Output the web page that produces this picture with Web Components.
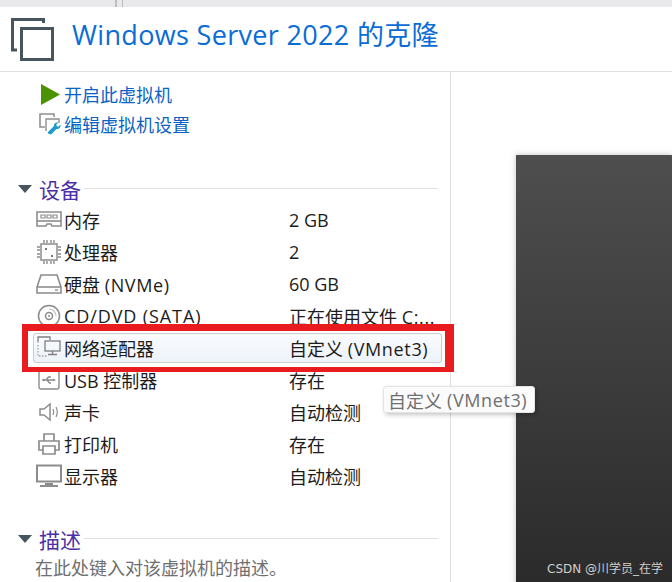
<!DOCTYPE html>
<html>
<head>
<meta charset="utf-8">
<style>
    html, body { margin: 0; padding: 0; background: #fff; }
    body { width: 672px; height: 582px; overflow: hidden; font-family: "Open Sans", "Noto Sans CJK SC", sans-serif; }
    .wide { letter-spacing: .65px; }
    .wider { letter-spacing: .9px; }
</style>
</head>
<body>
<vm-page>
    <vm-header slot="header" title-text="Windows Server 2022 的克隆"></vm-header>
    <vm-action slot="actions" icon="play">开启此虚拟机</vm-action>
    <vm-action slot="actions" icon="edit">编辑虚拟机设置</vm-action>
    <vm-section slot="devices" label="设备"></vm-section>
    <vm-device slot="devices" icon="ram">内存<span slot="value">2 GB</span></vm-device>
    <vm-device slot="devices" icon="cpu">处理器<span slot="value">2</span></vm-device>
    <vm-device slot="devices" icon="disk">硬盘 <span class="wide">(NVMe)</span><span slot="value">60 GB</span></vm-device>
    <vm-device slot="devices" icon="cd"><span class="wider">CD/DVD (SATA)</span><span slot="value">正在使用文件 <span class="wide">C:...</span></span></vm-device>
    <vm-device slot="devices" icon="net" selected>网络适配器<span slot="value">自定义 <span class="wide">(VMnet3)</span></span></vm-device>
    <vm-device slot="devices" icon="usb">USB 控制器<span slot="value">存在</span></vm-device>
    <vm-device slot="devices" icon="sound">声卡<span slot="value">自动检测</span></vm-device>
    <vm-device slot="devices" icon="printer">打印机<span slot="value">存在</span></vm-device>
    <vm-device slot="devices" icon="display">显示器<span slot="value">自动检测</span></vm-device>
    <vm-section slot="description" label="描述"></vm-section>
    <vm-note slot="description">在此处键入对该虚拟机的描述。</vm-note>
</vm-page>

<script>
const icons = {
    play: `<svg width="19" height="21" viewBox="0 0 19 21"><path d="M0 0L19 10.500L0 21Z" fill="#4c9304"/></svg>`,
    edit: `<svg width="24" height="24" viewBox="0 0 24 24" fill="none"><path d="M7 15H2V2H16V5" stroke="#8f8f8f" stroke-width="1.6"/><path d="M8 19V7H21V11" stroke="#8f8f8f" stroke-width="1.4"/><path d="M11 22L9.500 20.500L16 14C15.500 12 17.500 10 20.500 10.500L18 13L20 15L22.500 12.500C23 15.500 21 17.500 18.500 17L13 22.500Z" fill="#1c9ac9"/></svg>`,
    ram: `<svg width="26" height="20" viewBox="0 0 26 20" fill="none" stroke="#8c8c8c" stroke-width="1.600"><path d="M1 2H25V16H16L15 14H11L10 16H1Z"/><path d="M1 11H25"/><path d="M5 5H9V8H5ZM11 5H15V8H11ZM17 5H21V8H17Z" stroke-width="1.200"/></svg>`,
    cpu: `<svg width="26" height="26" viewBox="0 0 26 26" fill="none" stroke="#8c8c8c"><rect x="5" y="5" width="16" height="16" stroke-width="1.500"/><path d="M8 1V4M11 1V4M15 1V4M18 1V4M8 22V25M11 22V25M15 22V25M18 22V25M1 8H4M1 11H4M1 15H4M1 18H4M22 8H25M22 11H25M22 15H25M22 18H25" stroke-width="1.400"/><path d="M9 9h2v2h-2zM15 16h2v2h-2z" fill="#777" stroke="none"/></svg>`,
    disk: `<svg width="26" height="22" viewBox="0 0 26 22" fill="none" stroke="#8c8c8c" stroke-width="1.600"><path d="M1 14L5 2H21L25 14V20H1Z"/><path d="M1 14H25"/><path d="M19 17H22" stroke-width="1.400"/></svg>`,
    cd: `<svg width="24" height="24" viewBox="0 0 24 24" fill="none" stroke="#8c8c8c"><circle cx="12" cy="12" r="10.500" stroke-width="1.500"/><circle cx="12" cy="12" r="3.500" stroke-width="1.500"/><circle cx="12" cy="12" r="1" fill="#8c8c8c" stroke="none"/><path d="M12 5A7 7 0 0 1 19 12" stroke="#c0c0c0" stroke-width="1.200"/></svg>`,
    net: `<svg width="24" height="24" viewBox="0 0 24 24" fill="none" stroke="#7f7f7f" stroke-width="1.300"><path d="M1 6.500V1H13V4"/><rect x="8" y="5" width="15" height="10"/><path d="M15.500 15V18M11 18.500H20"/><path d="M1 9V20H10" stroke="#a0a0a0" stroke-dasharray="1.500 1.500"/></svg>`,
    usb: `<svg width="22" height="20" viewBox="0 0 22 20" fill="none" stroke="#8c8c8c" stroke-width="1.400"><rect x="1" y="1" width="20" height="18" rx="2"/><path d="M6 10H15M8 10L10.500 7H13M9 10L11.500 13H13"/><circle cx="5.500" cy="10" r="1.300" fill="#8c8c8c" stroke="none"/><path d="M15 8.500L18 10L15 11.500Z" fill="#8c8c8c" stroke="none"/></svg>`,
    sound: `<svg width="22" height="22" viewBox="0 0 22 22" fill="none" stroke="#8c8c8c" stroke-width="1.500"><path d="M2 8V14H6L12 19V3L6 8Z"/><path d="M15 8C16 10 16 12 15 14M18 6C19.500 9 19.500 13 18 16" stroke-width="1.200"/></svg>`,
    printer: `<svg width="24" height="24" viewBox="0 0 24 24" fill="none" stroke="#8c8c8c" stroke-width="1.700"><path d="M7 9V2H17V9"/><path d="M6 18H2V9H22V18H18"/><path d="M6 14H18V22H6Z"/></svg>`,
    display: `<svg width="26" height="24" viewBox="0 0 26 24" fill="none"><rect x="1" y="1.500" width="24" height="16" stroke="#8c8c8c" stroke-width="2"/><path d="M9 19H17V21H22V23H4V21H9Z" fill="#8c8c8c"/></svg>`
};

class VmPage extends HTMLElement {
    constructor() {
        super();
        this.attachShadow({ mode: 'open' }).innerHTML = `
            <style>
                :host { display: block; position: relative; width: 672px; height: 582px; overflow: hidden; background: #fff; }
                .tabs { height: 7px; background: #e9e9eb; display: flex; }
                .tabs i { width: 2px; height: 7px; background: #bdbdbf; margin-left: 115px; }
                .tabs i + i { width: 1px; margin-left: 5px; }
                .body { display: flex; height: 510px; border-top: 1px solid #e0e0e0; }
                .left { width: 451px; box-sizing: border-box; border-right: 1px solid #e0e0e0; flex: none; }
                .actions { padding: 7px 0 0 37px; }
                .devices { padding-top: 34px; }
                .devices ::slotted(vm-device) { top: 0; }
                .description { padding-top: 30px; }
                .right { flex: 1; padding: 83px 0 0 65px; }
                .screen { height: 440px; background: linear-gradient(#4e4e4e, #2a2a2a); box-shadow: 0 0 6px rgba(0,0,0,.25); }
                .outline {
                    position: absolute; left: 22px; top: 324px; width: 432px; height: 48px;
                    box-sizing: border-box; border: solid #e81c1f; border-width: 7px 9px 5px 6px; pointer-events: none;
                }
                .tip {
                    position: absolute; left: 383px; top: 386px; height: 27px; padding: 0 7px 0 4px;
                    display: flex; align-items: center; background: #fbfbfb; border: 1px solid #e4e4e4;
                    border-radius: 3px; box-shadow: 2px 2px 4px rgba(0,0,0,.22);
                    color: #6f6f6f; font-size: 18px; white-space: nowrap; box-sizing: border-box;
                }
                .tip span { letter-spacing: .6px; margin-left: 5px; }
                .watermark {
                    position: absolute; left: 547px; top: 559px; color: #cfcfcf; font-size: 12px; white-space: nowrap;
                    font-family: "DejaVu Sans", "Noto Sans CJK SC", sans-serif;
                }
            </style>
            <div class="tabs"><i></i><i></i></div>
            <slot name="header"></slot>
            <div class="body">
                <div class="left">
                    <div class="actions"><slot name="actions"></slot></div>
                    <div class="devices"><slot name="devices"></slot></div>
                    <div class="description"><slot name="description"></slot></div>
                </div>
                <div class="right"><div class="screen"></div></div>
            </div>
            <div class="outline"></div>
            <div class="tip">自定义<span>(VMnet3)</span></div>
            <div class="watermark">CSDN @川学员_在学</div>
        `;
    }
}

class VmHeader extends HTMLElement {
    constructor() {
        super();
        this.attachShadow({ mode: 'open' }).innerHTML = `
            <style>
                :host { display: flex; align-items: center; height: 64px; box-sizing: border-box; }
                svg { margin: 0 18px 0 11px; flex: none; }
                h1 { margin: -8px 0 0; font-size: 27px; font-weight: 400; color: #0a6cd6; white-space: nowrap; line-height: 40px; letter-spacing: .33px; }
            </style>
            <svg width="43" height="43" viewBox="0 0 43 43" fill="none" stroke="#47555f" stroke-width="3">
                <path d="M6 32H1.500V1.500H32.500V5"/>
                <rect x="10.500" y="10.500" width="31" height="31"/>
            </svg>
            <h1></h1>
        `;
        this.shadowRoot.querySelector('h1').textContent = this.getAttribute('title-text');
    }
}

class VmAction extends HTMLElement {
    constructor() {
        super();
        this.attachShadow({ mode: 'open' }).innerHTML = `
            <style>
                :host { display: flex; align-items: center; height: 30px; color: #0a63c4; font-size: 18px; white-space: nowrap; }
                .icon { width: 26px; margin-right: 1px; display: flex; justify-content: center; flex: none; }
            </style>
            <span class="icon">${icons[this.getAttribute('icon')]}</span>
            <slot></slot>
        `;
    }
}

class VmSection extends HTMLElement {
    constructor() {
        super();
        this.attachShadow({ mode: 'open' }).innerHTML = `
            <style>
                :host { display: flex; align-items: center; height: 32px; padding-left: 18px; padding-right: 12px; color: #4b2fa8; font-size: 21px; }
                .arrow { width: 0; height: 0; border: 7.500px solid transparent; border-top: 8px solid #47555f; border-bottom: 0; margin-right: 7px; }
                .rule { flex: 1; height: 1px; background: #e0e0e0; margin: -2px 0 0 3px; }
            </style>
            <span class="arrow"></span>
            <span class="label"></span>
            <span class="rule"></span>
        `;
        this.shadowRoot.querySelector('.label').textContent = this.getAttribute('label');
    }
}

class VmDevice extends HTMLElement {
    constructor() {
        super();
        this.attachShadow({ mode: 'open' }).innerHTML = `
            <style>
                :host { display: block; height: 32px; margin-top: 0; font-size: 18px; color: #1c1c1c; padding: 0 8px 0 33px; box-sizing: border-box; white-space: nowrap; }
                .row { display: flex; align-items: center; height: 30px; box-sizing: border-box; border: 1px solid transparent; border-radius: 3px; }
                :host([selected]) .row { background: linear-gradient(#f9fbfe, #eef3fa); border-color: #c9ccd0; }
                .icon { width: 30px; display: flex; justify-content: center; flex: none; }
                .name { width: 225px; flex: none; }
            </style>
            <div class="row">
                <span class="icon">${icons[this.getAttribute('icon')]}</span>
                <span class="name"><slot></slot></span>
                <span class="value"><slot name="value"></slot></span>
            </div>
        `;
    }
}

class VmNote extends HTMLElement {
    constructor() {
        super();
        this.attachShadow({ mode: 'open' }).innerHTML = `
            <style>
                :host { display: block; padding-left: 35px; color: #6f6f6f; font-size: 18px; line-height: 26px; white-space: nowrap; }
            </style>
            <slot></slot>
        `;
    }
}

customElements.define('vm-page', VmPage);
customElements.define('vm-header', VmHeader);
customElements.define('vm-action', VmAction);
customElements.define('vm-section', VmSection);
customElements.define('vm-device', VmDevice);
customElements.define('vm-note', VmNote);
</script>
</body>
</html>
